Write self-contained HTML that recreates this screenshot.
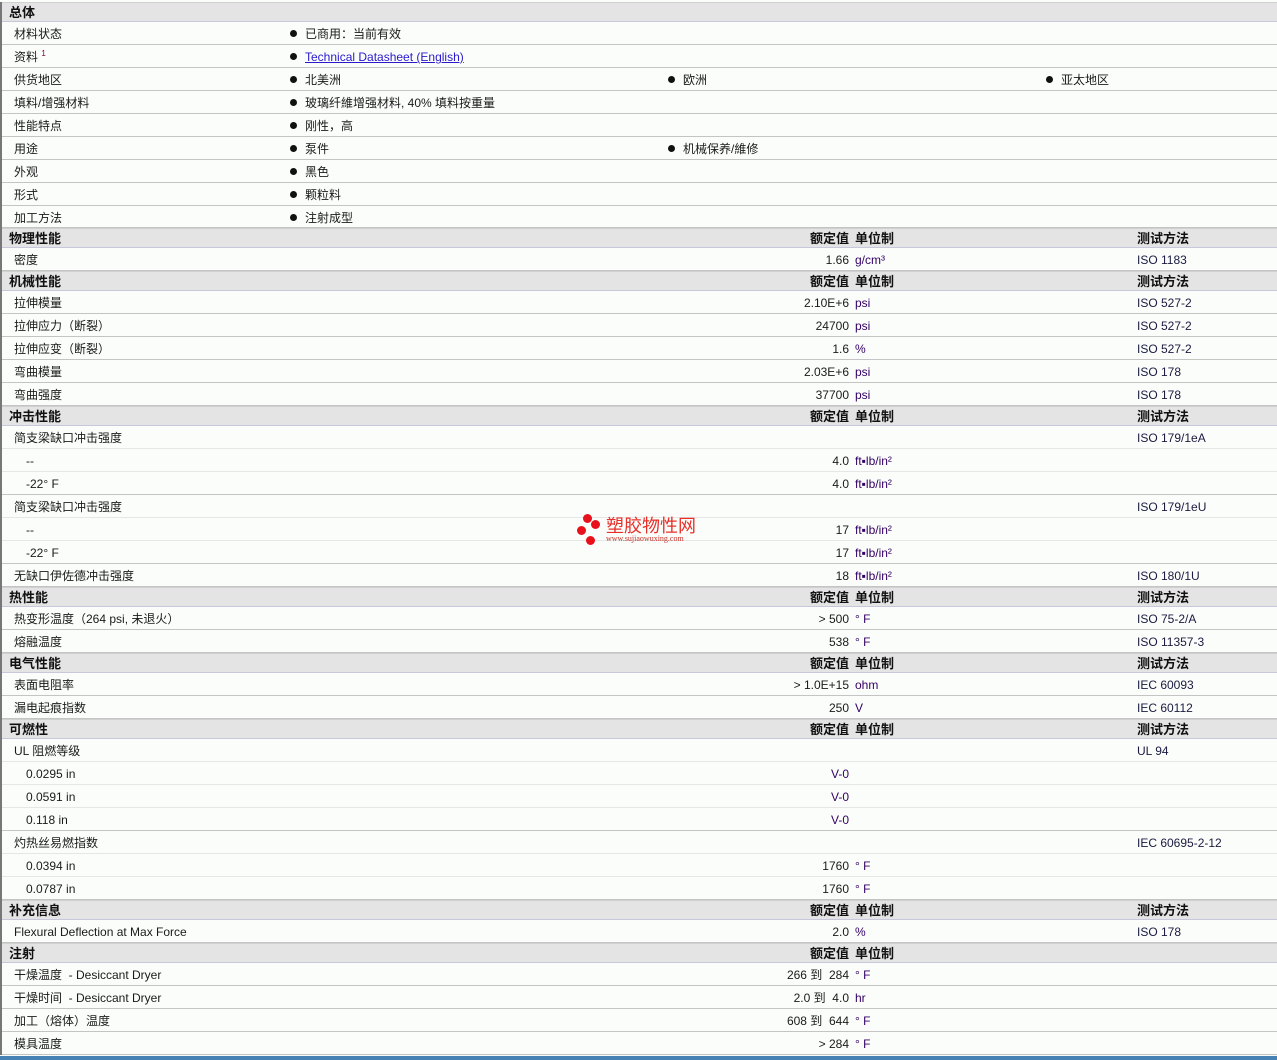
<!DOCTYPE html>
<html><head><meta charset="utf-8">
<style>
*{margin:0;padding:0;box-sizing:border-box}
body{width:1277px;height:1060px;overflow:hidden;background:#fbfdfb;font-family:"Liberation Sans","Noto Sans CJK SC",sans-serif;font-size:12px;color:#1a1a1a;position:relative}
#wrap{position:absolute;left:0;top:2px;width:1277px;border-left:2px solid #777}
.h{height:20px;background:#e4e4e4;border-top:1px solid #d0d0d0;border-bottom:1px solid #c8c8dc;position:relative;font-weight:bold;font-size:13px;color:#111}
.r{height:23px;border-bottom:1px solid #c4c4c4;position:relative}
.r.s{border-bottom-color:#e6e6e6}
.r span,.h span{position:absolute;white-space:nowrap;top:1px}
.r span{line-height:22px;height:22px}
.h span{line-height:18px;height:18px}
.l{left:12px}
.l2{left:24px}
.hl{left:7px}
.v{right:428px;text-align:right}
.u{left:853px;color:#330066}
.m{left:1135px;color:#1a1a40}
.b1{left:288px}.b2{left:666px}.b3{left:1044px}
.dot{display:inline-block;width:7px;height:7px;border-radius:50%;background:#111;margin-right:8px;vertical-align:1px}
a{color:#2a1acc;text-decoration:underline}
sup{font-size:8px;color:#800040;vertical-align:5px;line-height:0}
#bar{position:absolute;left:0;top:1056px;width:1277px;height:4px;background:#4682b4}
#logo{position:absolute;left:576px;top:514px;width:130px;height:34px}
</style></head><body>
<div id="wrap">
<div class="h"><span class="hl">总体</span></div>
<div class="r"><span class="l">材料状态</span><span class="b1"><i class="dot"></i>已商用：当前有效</span></div>
<div class="r"><span class="l">资料 <sup>1</sup></span><span class="b1"><i class="dot"></i><a>Technical Datasheet (English)</a></span></div>
<div class="r"><span class="l">供货地区</span><span class="b1"><i class="dot"></i>北美洲</span><span class="b2"><i class="dot"></i>欧洲</span><span class="b3"><i class="dot"></i>亚太地区</span></div>
<div class="r"><span class="l">填料/增强材料</span><span class="b1"><i class="dot"></i>玻璃纤維增强材料, 40% 填料按重量</span></div>
<div class="r"><span class="l">性能特点</span><span class="b1"><i class="dot"></i>刚性，高</span></div>
<div class="r"><span class="l">用途</span><span class="b1"><i class="dot"></i>泵件</span><span class="b2"><i class="dot"></i>机械保养/維修</span></div>
<div class="r"><span class="l">外观</span><span class="b1"><i class="dot"></i>黑色</span></div>
<div class="r"><span class="l">形式</span><span class="b1"><i class="dot"></i>颗粒料</span></div>
<div class="r" style="height:22px"><span class="l">加工方法</span><span class="b1"><i class="dot"></i>注射成型</span></div>

<div class="h"><span class="hl">物理性能</span><span class="v">额定值</span><span class="u" style="color:#111">单位制</span><span class="m" style="color:#111">测试方法</span></div>
<div class="r"><span class="l">密度</span><span class="v">1.66</span><span class="u">g/cm³</span><span class="m">ISO 1183</span></div>

<div class="h"><span class="hl">机械性能</span><span class="v">额定值</span><span class="u" style="color:#111">单位制</span><span class="m" style="color:#111">测试方法</span></div>
<div class="r"><span class="l">拉伸模量</span><span class="v">2.10E+6</span><span class="u">psi</span><span class="m">ISO 527-2</span></div>
<div class="r"><span class="l">拉伸应力（断裂）</span><span class="v">24700</span><span class="u">psi</span><span class="m">ISO 527-2</span></div>
<div class="r"><span class="l">拉伸应变（断裂）</span><span class="v">1.6</span><span class="u">%</span><span class="m">ISO 527-2</span></div>
<div class="r"><span class="l">弯曲模量</span><span class="v">2.03E+6</span><span class="u">psi</span><span class="m">ISO 178</span></div>
<div class="r"><span class="l">弯曲强度</span><span class="v">37700</span><span class="u">psi</span><span class="m">ISO 178</span></div>

<div class="h"><span class="hl">冲击性能</span><span class="v">额定值</span><span class="u" style="color:#111">单位制</span><span class="m" style="color:#111">测试方法</span></div>
<div class="r s"><span class="l">简支梁缺口冲击强度</span><span class="m">ISO 179/1eA</span></div>
<div class="r s"><span class="l2">--</span><span class="v">4.0</span><span class="u">ft▪lb/in²</span></div>
<div class="r"><span class="l2">-22° F</span><span class="v">4.0</span><span class="u">ft▪lb/in²</span></div>
<div class="r s"><span class="l">简支梁缺口冲击强度</span><span class="m">ISO 179/1eU</span></div>
<div class="r s"><span class="l2">--</span><span class="v">17</span><span class="u">ft▪lb/in²</span></div>
<div class="r"><span class="l2">-22° F</span><span class="v">17</span><span class="u">ft▪lb/in²</span></div>
<div class="r"><span class="l">无缺口伊佐德冲击强度</span><span class="v">18</span><span class="u">ft▪lb/in²</span><span class="m">ISO 180/1U</span></div>

<div class="h"><span class="hl">热性能</span><span class="v">额定值</span><span class="u" style="color:#111">单位制</span><span class="m" style="color:#111">测试方法</span></div>
<div class="r"><span class="l">热变形温度（264 psi, 未退火）</span><span class="v">&gt; 500</span><span class="u">° F</span><span class="m">ISO 75-2/A</span></div>
<div class="r"><span class="l">熔融温度</span><span class="v">538</span><span class="u">° F</span><span class="m">ISO 11357-3</span></div>

<div class="h"><span class="hl">电气性能</span><span class="v">额定值</span><span class="u" style="color:#111">单位制</span><span class="m" style="color:#111">测试方法</span></div>
<div class="r"><span class="l">表面电阻率</span><span class="v">&gt; 1.0E+15</span><span class="u">ohm</span><span class="m">IEC 60093</span></div>
<div class="r"><span class="l">漏电起痕指数</span><span class="v">250</span><span class="u">V</span><span class="m">IEC 60112</span></div>

<div class="h"><span class="hl">可燃性</span><span class="v">额定值</span><span class="u" style="color:#111">单位制</span><span class="m" style="color:#111">测试方法</span></div>
<div class="r s"><span class="l">UL 阻燃等级</span><span class="m">UL 94</span></div>
<div class="r s"><span class="l2">0.0295 in</span><span class="u" style="left:829px">V-0</span></div>
<div class="r s"><span class="l2">0.0591 in</span><span class="u" style="left:829px">V-0</span></div>
<div class="r"><span class="l2">0.118 in</span><span class="u" style="left:829px">V-0</span></div>
<div class="r s"><span class="l">灼热丝易燃指数</span><span class="m">IEC 60695-2-12</span></div>
<div class="r s"><span class="l2">0.0394 in</span><span class="v">1760</span><span class="u">° F</span></div>
<div class="r"><span class="l2">0.0787 in</span><span class="v">1760</span><span class="u">° F</span></div>

<div class="h"><span class="hl">补充信息</span><span class="v">额定值</span><span class="u" style="color:#111">单位制</span><span class="m" style="color:#111">测试方法</span></div>
<div class="r"><span class="l">Flexural Deflection at Max Force</span><span class="v">2.0</span><span class="u">%</span><span class="m">ISO 178</span></div>

<div class="h"><span class="hl">注射</span><span class="v">额定值</span><span class="u" style="color:#111">单位制</span></div>
<div class="r"><span class="l">干燥温度 &nbsp;- Desiccant Dryer</span><span class="v">266 到 &nbsp;284</span><span class="u">° F</span></div>
<div class="r"><span class="l">干燥时间 &nbsp;- Desiccant Dryer</span><span class="v">2.0 到 &nbsp;4.0</span><span class="u">hr</span></div>
<div class="r"><span class="l">加工（熔体）温度</span><span class="v">608 到 &nbsp;644</span><span class="u">° F</span></div>
<div class="r"><span class="l">模具温度</span><span class="v">&gt; 284</span><span class="u">° F</span></div>
</div>
<div id="bar"></div>
<div id="logo">
<i style="position:absolute;left:7px;top:0;width:9px;height:9px;border-radius:50%;background:#e8101a"></i>
<i style="position:absolute;left:15px;top:6px;width:9px;height:9px;border-radius:50%;background:#e8101a"></i>
<i style="position:absolute;left:1px;top:12px;width:9px;height:9px;border-radius:50%;background:#e8101a"></i>
<i style="position:absolute;left:10px;top:22px;width:9px;height:9px;border-radius:50%;background:#e8101a"></i>
<span style="position:absolute;left:30px;top:1px;font-size:18px;color:#e8302a;font-family:'Noto Sans CJK SC',sans-serif;line-height:20px">塑胶物性网</span>
<span style="position:absolute;left:30px;top:20px;font-size:8px;color:#c83028;font-family:'Liberation Serif',serif">www.sujiaowuxing.com</span>
</div>
</body></html>
